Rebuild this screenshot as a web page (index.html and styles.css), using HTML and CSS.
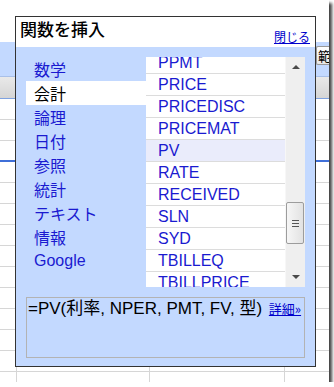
FILE: index.html
```html
<!DOCTYPE html>
<html>
<head>
    <title>関数を挿入</title>
    <link rel="stylesheet" href="styles.css">
</head>
<body>
    <div class="screen">
        <!-- spreadsheet behind the dialog -->
        <div class="sheet">
            <div class="toolbar"></div>
            <div class="formula-band">
                <span class="tool-button">範</span>
            </div>
            <div class="column-head"></div>
            <div class="grid-row"><span class="c0"></span><span class="c1"></span><span class="c2"></span><span class="c3"></span></div>
            <div class="grid-row"><span class="c0"></span><span class="c1"></span><span class="c2"></span><span class="c3"></span></div>
            <div class="grid-row selected"><span class="c0"></span><span class="c1"></span><span class="c2"></span><span class="c3"></span></div>
            <div class="grid-row"><span class="c0"></span><span class="c1"></span><span class="c2"></span><span class="c3"></span></div>
            <div class="grid-row"><span class="c0"></span><span class="c1"></span><span class="c2"></span><span class="c3"></span></div>
            <div class="grid-row"><span class="c0"></span><span class="c1"></span><span class="c2"></span><span class="c3"></span></div>
            <div class="grid-row"><span class="c0"></span><span class="c1"></span><span class="c2"></span><span class="c3"></span></div>
            <div class="grid-row"><span class="c0"></span><span class="c1"></span><span class="c2"></span><span class="c3"></span></div>
            <div class="grid-row"><span class="c0"></span><span class="c1"></span><span class="c2"></span><span class="c3"></span></div>
            <div class="grid-row"><span class="c0"></span><span class="c1"></span><span class="c2"></span><span class="c3"></span></div>
            <div class="grid-row"><span class="c0"></span><span class="c1"></span><span class="c2"></span><span class="c3"></span></div>
            <div class="grid-row"><span class="c0"></span><span class="c1"></span><span class="c2"></span><span class="c3"></span></div>
            <div class="grid-row"><span class="c0"></span><span class="c1"></span><span class="c2"></span><span class="c3"></span></div>
            <div class="grid-row"><span class="c0"></span><span class="c1"></span><span class="c2"></span><span class="c3"></span></div>
        </div>

        <!-- insert function dialog -->
        <div class="dialog">
            <div class="dialog-title">
                <span class="title-text">関数を挿入</span>
                <a class="close-link" href="#">閉じる</a>
            </div>
            <div class="dialog-body">
                <div class="picker">
                    <ul class="categories">
                        <li>数学</li>
                        <li class="active">会計</li>
                        <li>論理</li>
                        <li>日付</li>
                        <li>参照</li>
                        <li>統計</li>
                        <li>テキスト</li>
                        <li>情報</li>
                        <li class="latin">Google</li>
                    </ul>
                    <div class="functions">
                        <ul class="function-list">
                            <li>PPMT</li>
                            <li>PRICE</li>
                            <li>PRICEDISC</li>
                            <li>PRICEMAT</li>
                            <li class="hover">PV</li>
                            <li>RATE</li>
                            <li>RECEIVED</li>
                            <li>SLN</li>
                            <li>SYD</li>
                            <li>TBILLEQ</li>
                            <li>TBILLPRICE</li>
                        </ul>
                        <div class="scrollbar">
                            <div class="arrow up"></div>
                            <div class="track">
                                <div class="thumb"><span></span><span></span><span></span></div>
                            </div>
                            <div class="arrow down"></div>
                        </div>
                    </div>
                </div>
                <div class="formula">
                    =PV(利率, NPER, PMT, FV, 型) <a class="more-link" href="#">詳細»</a>
                </div>
            </div>
        </div>
    </div>
</body>
</html>
```

FILE: styles.css
```css
body {
    margin: 0;
    background: #ffffff;
    font-family: "Liberation Sans", "Noto Sans CJK JP", sans-serif;
}

.screen {
    position: relative;
    width: 329px;
    height: 382px;
    overflow: hidden;
    background: #ffffff;
    box-shadow: 3px 3px 3px rgba(0, 0, 0, 0.75);
}

/* spreadsheet */
.sheet {
    display: flex;
    flex-direction: column;
}

.toolbar {
    height: 42px;
    background: #ffffff;
}

.formula-band {
    height: 34px;
    background: #c3d9ff;
    border-bottom: 1px solid #a9c0e8;
    display: flex;
    justify-content: flex-end;
    align-items: flex-start;
}

.tool-button {
    margin-top: 4px;
    width: 11px;
    height: 17px;
    border: 1px solid #9a9a9a;
    border-right: none;
    border-radius: 2px 0 0 2px;
    background: linear-gradient(#ffffff, #e6e6e6);
    font-family: "Noto Sans CJK JP", sans-serif;
    font-size: 13px;
    line-height: 17px;
    padding-left: 1px;
    overflow: hidden;
    white-space: nowrap;
    color: #000;
}

.column-head {
    height: 21px;
    background: linear-gradient(#e9e9e9, #d5d5d5);
    border-bottom: 1px solid #7fa2e0;
}

.grid-row {
    display: flex;
    height: 20px;
    border-bottom: 1px solid #d6d6d6;
}

.grid-row.selected {
    border-bottom: 2px solid #3f6fd8;
    height: 19px;
}

.grid-row span {
    border-right: 1px solid #d6d6d6;
}

.c0 { width: 16px; }
.c1 { width: 132px; }
.c2 { width: 134px; }
.c3 { flex: 1; border-right: none !important; }

/* dialog */
.dialog {
    position: absolute;
    left: 15px;
    top: 16px;
    width: 299px;
    height: 349px;
    border: 1px solid #333333;
    background: #c3d9ff;
    display: flex;
    flex-direction: column;
}

.dialog-title {
    height: 31px;
    background: #ffffff;
    display: flex;
    justify-content: space-between;
    align-items: flex-end;
    padding: 0 5px 3px 4px;
    box-sizing: border-box;
}

.title-text {
    font-family: "Noto Sans CJK JP", sans-serif;
    font-size: 17px;
    font-weight: 500;
    line-height: 22px;
    margin-bottom: 4px;
    color: #000;
}

.close-link {
    font-family: "Noto Sans CJK JP", sans-serif;
    font-size: 12px;
    line-height: 14px;
    color: #0000cc;
}

.dialog-body {
    padding: 10px 10px 8px 10px;
    display: flex;
    flex-direction: column;
    gap: 10px;
}

.picker {
    display: flex;
    height: 230px;
}

.categories {
    list-style: none;
    margin: 0;
    padding: 0;
    width: 120px;
}

.categories li {
    height: 24px;
    line-height: 24px;
    padding-left: 8px;
    font-family: "Noto Sans CJK JP", sans-serif;
    font-size: 16px;
    color: #1a1ad0;
}

.categories li.latin {
    font-family: "Liberation Sans", sans-serif;
}

.categories li.active {
    background: #ffffff;
    color: #000000;
}

.functions {
    flex: 1;
    display: flex;
    background: #ffffff;
    overflow: hidden;
}

.function-list {
    list-style: none;
    margin: -5px 0 0 0;
    padding: 0;
    flex: 1;
}

.function-list li {
    height: 21px;
    line-height: 21px;
    border-bottom: 1px solid #dcdcdc;
    padding-left: 12px;
    font-size: 16px;
    color: #1a1ad0;
}

.function-list li.hover {
    background: #eaecfb;
}

.scrollbar {
    width: 19px;
    background: #efefef;
    display: flex;
    flex-direction: column;
    border-left: 1px solid #f7f7f7;
}

.arrow {
    height: 20px;
    display: flex;
    justify-content: center;
    align-items: center;
}

.arrow::after {
    content: "";
    border-left: 4px solid transparent;
    border-right: 4px solid transparent;
}

.arrow.up::after {
    border-bottom: 4px solid #4a4a4a;
}

.arrow.down::after {
    border-top: 4px solid #4a4a4a;
}

.track {
    flex: 1;
    display: flex;
    flex-direction: column;
    justify-content: flex-end;
    padding-bottom: 23px;
}

.thumb {
    height: 40px;
    margin: 0 1px 0 0;
    border: 1px solid #9c9c9c;
    border-radius: 2px;
    background: linear-gradient(to right, #f6f6f6, #e2e2e2);
    display: flex;
    flex-direction: column;
    justify-content: center;
    align-items: center;
    gap: 2px;
}

.thumb span {
    width: 7px;
    height: 1px;
    background: #555555;
}

.formula {
    height: 58px;
    border: 1px solid #b3b3b3;
    padding: 1px 0 0 1px;
    font-size: 17px;
    line-height: 19px;
    color: #000000;
    white-space: nowrap;
}

.more-link {
    font-family: "Noto Sans CJK JP", sans-serif;
    font-size: 13px;
    color: #0000cc;
    margin-left: 2px;
}
```
